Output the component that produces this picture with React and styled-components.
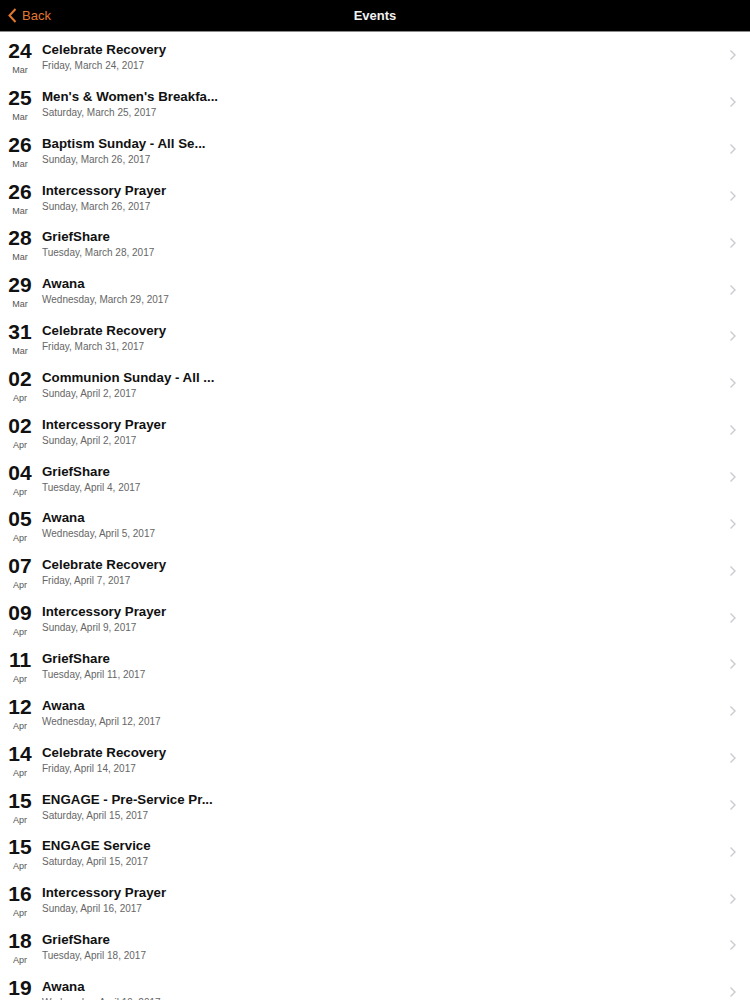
import React from "react";
import styled, { createGlobalStyle } from "styled-components";

const events = [
  ["24", "Mar", "Celebrate Recovery", "Friday, March 24, 2017"],
  ["25", "Mar", "Men's & Women's Breakfa...", "Saturday, March 25, 2017"],
  ["26", "Mar", "Baptism Sunday - All Se...", "Sunday, March 26, 2017"],
  ["26", "Mar", "Intercessory Prayer", "Sunday, March 26, 2017"],
  ["28", "Mar", "GriefShare", "Tuesday, March 28, 2017"],
  ["29", "Mar", "Awana", "Wednesday, March 29, 2017"],
  ["31", "Mar", "Celebrate Recovery", "Friday, March 31, 2017"],
  ["02", "Apr", "Communion Sunday - All ...", "Sunday, April 2, 2017"],
  ["02", "Apr", "Intercessory Prayer", "Sunday, April 2, 2017"],
  ["04", "Apr", "GriefShare", "Tuesday, April 4, 2017"],
  ["05", "Apr", "Awana", "Wednesday, April 5, 2017"],
  ["07", "Apr", "Celebrate Recovery", "Friday, April 7, 2017"],
  ["09", "Apr", "Intercessory Prayer", "Sunday, April 9, 2017"],
  ["11", "Apr", "GriefShare", "Tuesday, April 11, 2017"],
  ["12", "Apr", "Awana", "Wednesday, April 12, 2017"],
  ["14", "Apr", "Celebrate Recovery", "Friday, April 14, 2017"],
  ["15", "Apr", "ENGAGE - Pre-Service Pr...", "Saturday, April 15, 2017"],
  ["15", "Apr", "ENGAGE Service", "Saturday, April 15, 2017"],
  ["16", "Apr", "Intercessory Prayer", "Sunday, April 16, 2017"],
  ["18", "Apr", "GriefShare", "Tuesday, April 18, 2017"],
  ["19", "Apr", "Awana", "Wednesday, April 19, 2017"],
];

const GlobalStyle = createGlobalStyle`
  html, body {
    margin: 0;
    padding: 0;
    background: #ffffff;
    font-family: "Liberation Sans", Arial, sans-serif;
    overflow: hidden;
  }
`;

const Page = styled.div`
  width: 750px;
  height: 1000px;
  overflow: hidden;
  background: #ffffff;
`;

const NavBar = styled.header`
  position: relative;
  height: 31px;
  background: #000000;
  border-bottom: 1px solid #8a8a8a;
  display: flex;
  align-items: center;
  justify-content: center;
`;

const BackButton = styled.div`
  position: absolute;
  left: 8px;
  top: 0;
  height: 31px;
  display: flex;
  align-items: center;
  gap: 5px;
  color: #e3782f;
  font-size: 13px;
`;

const NavTitle = styled.div`
  color: #f2f2f2;
  font-size: 13px;
  font-weight: 700;
`;

const List = styled.div`
  display: flex;
  flex-direction: column;
`;

const Row = styled.div`
  height: 46.85px;
  display: flex;
  align-items: flex-start;
  padding: 0 13px 0 8px;
  box-sizing: border-box;
  gap: 10px;
`;

const DateCol = styled.div`
  width: 24px;
  padding-top: 8px;
  display: flex;
  flex-direction: column;
  align-items: center;
`;

const Day = styled.div`
  font-size: 21px;
  line-height: 21px;
  font-weight: 700;
  color: #111111;
`;

const Month = styled.div`
  margin-top: 4px;
  font-size: 9px;
  line-height: 11px;
  color: #555555;
`;

const Info = styled.div`
  flex: 1;
  padding-top: 10px;
  display: flex;
  flex-direction: column;
`;

const Title = styled.div`
  font-size: 13.3px;
  line-height: 16px;
  font-weight: 700;
  color: #111111;
  white-space: nowrap;
`;

const When = styled.div`
  margin-top: 2px;
  font-size: 10px;
  line-height: 12px;
  color: #666666;
`;

const Chevron = styled.div`
  align-self: center;
  display: flex;
`;

const ChevronRight = () => (
  <svg width="8" height="12" viewBox="0 0 8 12">
    <path d="M1.5 1.5 L6 6 L1.5 10.5" fill="none" stroke="#cbcbcf" strokeWidth="1.4" />
  </svg>
);

const ChevronLeft = () => (
  <svg width="9" height="15" viewBox="0 0 9 15">
    <path d="M7.5 1 L1.5 7.5 L7.5 14" fill="none" stroke="#e3782f" strokeWidth="2" />
  </svg>
);

const App = () => {
  return (
    <Page>
      <GlobalStyle />
      <NavBar>
        <BackButton>
          <ChevronLeft />
          <span>Back</span>
        </BackButton>
        <NavTitle>Events</NavTitle>
      </NavBar>
      <List>
        {events.map(([day, month, title, when], i) => (
          <Row key={i}>
            <DateCol>
              <Day>{day}</Day>
              <Month>{month}</Month>
            </DateCol>
            <Info>
              <Title>{title}</Title>
              <When>{when}</When>
            </Info>
            <Chevron>
              <ChevronRight />
            </Chevron>
          </Row>
        ))}
      </List>
    </Page>
  );
};

export default App;
